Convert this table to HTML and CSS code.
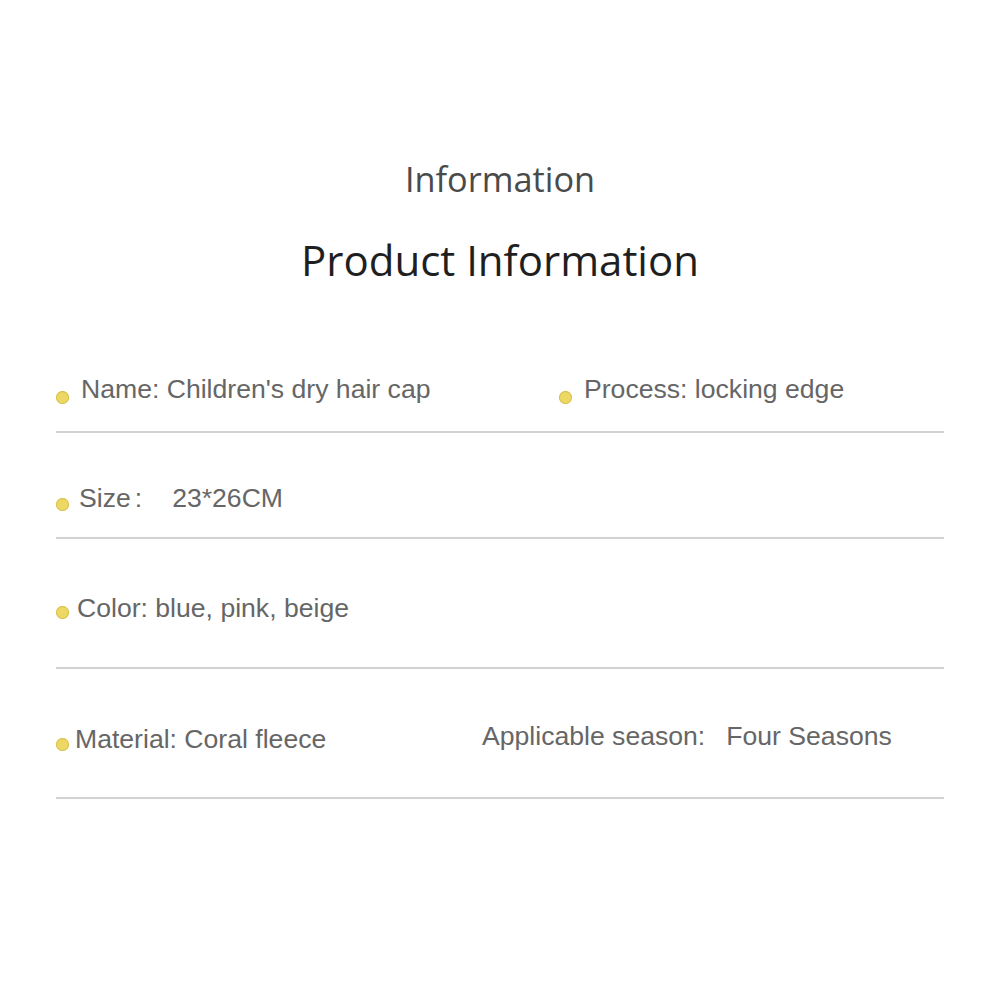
FILE: index.html
```html
<!DOCTYPE html>
<html lang="en">
<head>
<meta charset="utf-8">
<title>Product Information</title>
<link rel="stylesheet" href="styles.css">
</head>
<body>
<main class="sheet">
  <header class="head">
    <div class="kicker">Information</div>
    <h1 class="title">Product Information</h1>
  </header>
  <section class="table">
    <div class="row row-1">
      <div class="cell cell-left"><span class="dot"></span><span class="txt">Name: Children's dry hair cap</span></div>
      <div class="cell cell-right"><span class="dot"></span><span class="txt">Process: locking edge</span></div>
    </div>
    <div class="row row-2">
      <div class="cell cell-left"><span class="dot"></span><span class="txt">Size<span class="colon">:</span><span class="val">23*26CM</span></span></div>
    </div>
    <div class="row row-3">
      <div class="cell cell-left"><span class="dot"></span><span class="txt">Color: blue, pink, beige</span></div>
    </div>
    <div class="row row-4">
      <div class="cell cell-left"><span class="dot"></span><span class="txt">Material: Coral fleece</span></div>
      <div class="cell cell-season"><span class="txt">Applicable season:<span class="val2">Four Seasons</span></span></div>
    </div>
  </section>
</main>
</body>
</html>
```

FILE: styles.css
```css
html, body {
  margin: 0;
  padding: 0;
  background: #ffffff;
}

.sheet {
  width: 1000px;
  height: 1000px;
  box-sizing: border-box;
  padding: 0 56px;
  font-family: "Liberation Sans", Arial, sans-serif;
}

.head {
  padding-top: 158px;
  display: flex;
  flex-direction: column;
  align-items: center;
}

.kicker {
  font-family: "Open Sans", "Noto Sans", sans-serif;
  font-size: 34.3px;
  line-height: 42px;
  color: #4a4a4a;
}

.title {
  margin: 34px 0 0;
  font-family: "Open Sans", "Noto Sans", sans-serif;
  font-weight: 400;
  font-size: 42px;
  line-height: 52px;
  color: #1f1f1f;
}

.row {
  display: flex;
  align-items: center;
  border-bottom: 2px solid #d2d2d2;
  box-sizing: border-box;
}

.row-1 { height: 147px; padding-top: 61px; }
.row-2 { height: 106px; padding-top: 26px; }
.row-3 { height: 130px; padding-top: 10px; }
.row-4 { height: 130px; padding-top: 10px; }

.cell {
  display: flex;
  align-items: center;
  font-size: 26.6px;
  line-height: 30px;
  color: #666666;
}

.cell-left { width: 503px; }
.cell-season { margin-left: -77px; }

.dot {
  width: 13px;
  height: 13px;
  border-radius: 50%;
  background: #ecd862;
  box-shadow: inset 0 0 0 1px #d6bf50;
  flex: none;
}

.row-1 .dot { margin-right: 12px; margin-top: 17px; }
.row-2 .dot { margin-right: 10px; margin-top: 12px; }
.row-3 .dot { margin-right: 8px; margin-top: 8px; }
.row-4 .dot { margin-right: 6px; margin-top: 12px; }

.row-4 .cell-left .txt { position: relative; top: 1px; }
.cell-season .txt { position: relative; top: -2px; }

.colon { margin: 0 30px 0 4px; }
.val2 { margin-left: 21px; }
```
